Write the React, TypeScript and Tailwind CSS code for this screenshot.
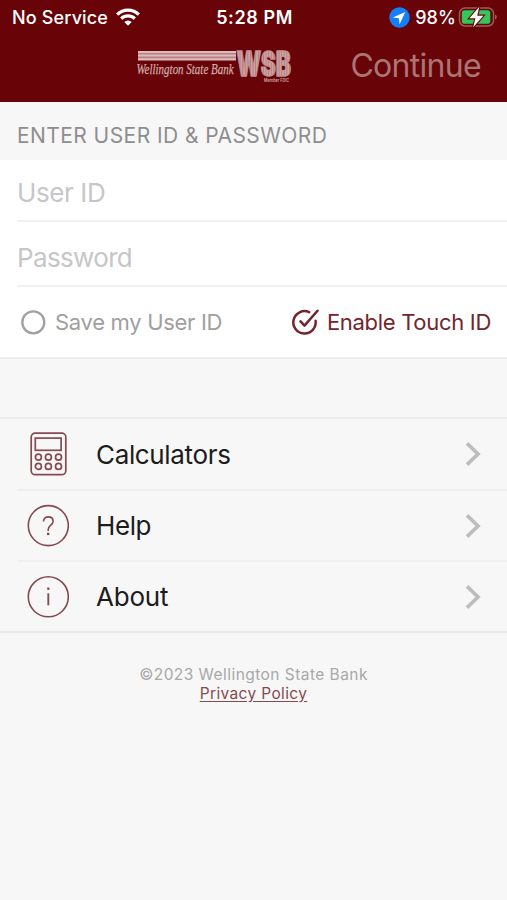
import { useState } from 'react';

// Menu entries shown under the login form
const menuItems = [
  {
    id: 'calculators',
    title: 'Calculators',
    titleClass: 'tracking-[-0.35px]',
    icon: (
      <svg className="h-[44px] w-[42px]" viewBox="0 0 42 44" fill="none" stroke="currentColor" strokeWidth={1.7}>
        <rect x="4.2" y="1.1" width="34.6" height="41.6" rx="4" />
        <rect x="8.3" y="6.1" width="25.8" height="12.2" />
        <circle cx="11.4" cy="25.2" r="3" />
        <circle cx="21.4" cy="25.2" r="3" />
        <circle cx="31.5" cy="25.2" r="3" />
        <circle cx="11.4" cy="34.4" r="3" />
        <circle cx="21.4" cy="34.4" r="3" />
        <circle cx="31.5" cy="34.4" r="3" />
      </svg>
    ),
  },
  {
    id: 'help',
    title: 'Help',
    titleClass: 'tracking-[-0.4px]',
    icon: (
      <svg className="h-[44px] w-[42px]" viewBox="0 0 42 44" fill="none" stroke="currentColor" strokeWidth={1.6}>
        <circle cx="21.3" cy="21.6" r="20" />
        <path d="M16.5 17.4c0-2.8 1.9-4.5 4.8-4.5s4.8 1.7 4.8 4.3c0 4.1-4.9 4-4.9 8.5v1.2" />
        <path d="M21.2 28.7v2.4" strokeWidth={2.4} />
      </svg>
    ),
  },
  {
    id: 'about',
    title: 'About',
    titleClass: 'tracking-[-0.2px]',
    icon: (
      <svg className="h-[44px] w-[42px]" viewBox="0 0 42 44" fill="none" stroke="currentColor" strokeWidth={1.6}>
        <circle cx="21.3" cy="21.8" r="20" />
        <path d="M21.3 18.3v12" strokeWidth={1.9} />
        <path d="M21.3 12.5v2.4" strokeWidth={2.2} />
      </svg>
    ),
  },
];

const StatusBar: React.FC = () => (
  <div className="grid h-[34px] grid-cols-3 items-center pl-[12px] pr-[9px] text-[18px] font-medium text-white">
    <div className="flex items-center gap-[8px] whitespace-nowrap">
      <span className="tracking-[0.15px]">No Service</span>
      <svg className="h-[18px] w-[24px]" viewBox="0 0 24 18" fill="none" stroke="white" strokeWidth={3.2}>
        <path d="M1.2 6.6a15.3 15.3 0 0 1 21.6 0" />
        <path d="M5.2 10.7a9.6 9.6 0 0 1 13.6 0" />
        <path d="M12 17.8 8.3 14a5.3 5.3 0 0 1 7.4 0z" fill="white" stroke="none" />
      </svg>
    </div>
    <span className="pr-px text-center font-semibold tracking-[0.6px]">5:28 PM</span>
    <div className="flex items-center justify-end whitespace-nowrap">
      <svg className="mr-[5px] h-[21px] w-[21px] shrink-0" viewBox="0 0 21 21">
        <circle cx="10.5" cy="10.5" r="10.2" fill="#1480fb" />
        <path d="M16.3 4.9 3.8 10.5l6 .8.8 6z" fill="white" />
      </svg>
      <span className="tracking-[0.1px]">98%</span>
      <svg className="ml-[2px] h-[22px] w-[40px] shrink-0" viewBox="0 0 40 22">
        <rect x="1.5" y="2" width="34" height="18" rx="5.5" fill="none" stroke="#9b5c5c" strokeWidth={1.5} />
        <path d="M37 8.5v5c2.4-.7 2.4-4.3 0-5z" fill="#9b5c5c" />
        <rect x="3.8" y="4.3" width="28.5" height="13.4" rx="2.8" fill="#34c759" />
        <path d="M21.3.8 11.4 12.3h6l-2.2 9L25.4 9.7h-6.2z" fill="white" stroke="#680407" strokeWidth={2.2} paintOrder="stroke" />
      </svg>
    </div>
  </div>
);

// Striped bank wordmark
const BankLogo: React.FC = () => (
  <svg className="h-[36px] w-[160px] overflow-visible" viewBox="0 0 160 36" fill="#d3abac">
    <defs>
      <pattern id="stripes" width="2.6" height="4" patternUnits="userSpaceOnUse">
        <rect width="2.6" height="4" fill="#cda3a4" />
        <rect width="0.9" height="4" fill="#b47c7d" />
      </pattern>
    </defs>
    <rect x="5" y="3" width="98" height="9.5" fill="#b98081" />
    <path d="M5 4h98M5 7.6h98M5 11.3h98" stroke="#dcbcbd" strokeWidth={2} />
    <text x="3.5" y="26.3" textLength="97" lengthAdjust="spacingAndGlyphs" fontFamily="Liberation Serif, serif" fontStyle="italic" fontSize="15.5" stroke="#d3abac" strokeWidth={0.25}>
      Wellington State Bank
    </text>
    <text x="103.5" y="28.3" textLength="54.5" lengthAdjust="spacingAndGlyphs" fontFamily="Inter, sans-serif" fontWeight="900" fontSize="34" fill="url(#stripes)" stroke="#c49293" strokeWidth={1.4} strokeLinejoin="round">
      WSB
    </text>
    <text x="131" y="34" textLength="25" lengthAdjust="spacingAndGlyphs" fontFamily="Inter, sans-serif" fontWeight="600" fontSize="4.5">
      Member FDIC
    </text>
  </svg>
);

const App: React.FC = () => {
  const [saveUserId, setSaveUserId] = useState(false);
  const [touchId, setTouchId] = useState(true);

  return (
    <div className="min-h-[900px] w-[507px] overflow-hidden bg-[#f7f7f7] font-[Inter,sans-serif]">
      {/* Header */}
      <header className="h-[102px] bg-[#680407]">
        <StatusBar />
        <div className="flex h-[64px] items-center pl-[133px] pr-[26px]">
          <BankLogo />
          <button className="ml-auto text-[32px] leading-none tracking-[-0.7px] text-[#ab7475]">Continue</button>
        </div>
      </header>

      {/* Login form */}
      <h1 className="flex h-[58px] items-center pl-[17px] pt-[9px] text-[21px] tracking-[0.43px] text-[#8e8e90]">
        ENTER USER ID &amp; PASSWORD
      </h1>
      <form className="border-b-2 border-[#ededed] bg-white">
        <div className="ml-[17px] border-b-2 border-[#f1f1f1]">
          <input placeholder="User ID" className="block h-[60px] w-full pt-[5px] text-[26px] tracking-[-0.4px] outline-none placeholder:text-[#c6c6c8]" />
        </div>
        <div className="ml-[17px] border-b-2 border-[#f1f1f1]">
          <input placeholder="Password" type="password" className="block h-[63px] w-full pt-[7px] text-[26px] tracking-[-0.65px] outline-none placeholder:text-[#c6c6c8]" />
        </div>
        <div className="flex h-[70px] items-center justify-between pl-[20px] pr-[16px] text-[22px] tracking-[-0.3px]">
          <button type="button" onClick={() => setSaveUserId(!saveUserId)} className="flex items-center gap-[9px] text-[#a0a0a0]">
            <svg className="h-[26px] w-[26px]" viewBox="0 0 26 26" fill={saveUserId ? 'currentColor' : 'none'} stroke="currentColor" strokeWidth={2.3}>
              <circle cx="13.3" cy="13.3" r="11" />
            </svg>
            <span>Save my User ID</span>
          </button>
          <button type="button" onClick={() => setTouchId(!touchId)} className="flex items-center gap-[8px] text-[#72252c]">
            <svg className="h-[28px] w-[28px]" viewBox="0 0 28 28" fill="none" stroke="currentColor" strokeWidth={2.5} strokeLinecap="round" strokeLinejoin="round">
              <path d="M18.2 4.2A11.2 11.2 0 1 0 24.6 12.8" />
              {touchId && <path d="m9.5 13.4 4 4.2L26.5 2.8" />}
            </svg>
            <span>Enable Touch ID</span>
          </button>
        </div>
      </form>

      {/* Menu */}
      <nav className="mt-[58px] border-y-2 border-[#ededed]">
        {menuItems.map((item, index) => (
          <div key={item.id} className={`ml-[17px] flex items-center pl-[10px] pr-[26px] ${index > 0 ? 'h-[71px] border-t-2 border-[#efefef]' : 'h-[70px]'}`}>
            <span className="text-[#854b50]">{item.icon}</span>
            <span className={`ml-[27px] text-[26px] text-[#1c1c1c] ${item.titleClass}`}>{item.title}</span>
            <svg className="ml-auto h-[24px] w-[16px]" viewBox="0 0 16 24" fill="none" stroke="#bdbdbd" strokeWidth={3.7}>
              <path d="M2 1.3 13 12 2 22.7" />
            </svg>
          </div>
        ))}
      </nav>

      {/* Footer */}
      <footer className="mt-[32px] flex flex-col items-center text-[15.5px] leading-[19px]">
        <p className="tracking-[0.45px] text-[#a8a8a8]">©2023 Wellington State Bank</p>
        <a href="#privacy" className="tracking-[0.35px] text-[#854b50] underline underline-offset-[2px]">Privacy Policy</a>
      </footer>
    </div>
  );
};

export default App;
